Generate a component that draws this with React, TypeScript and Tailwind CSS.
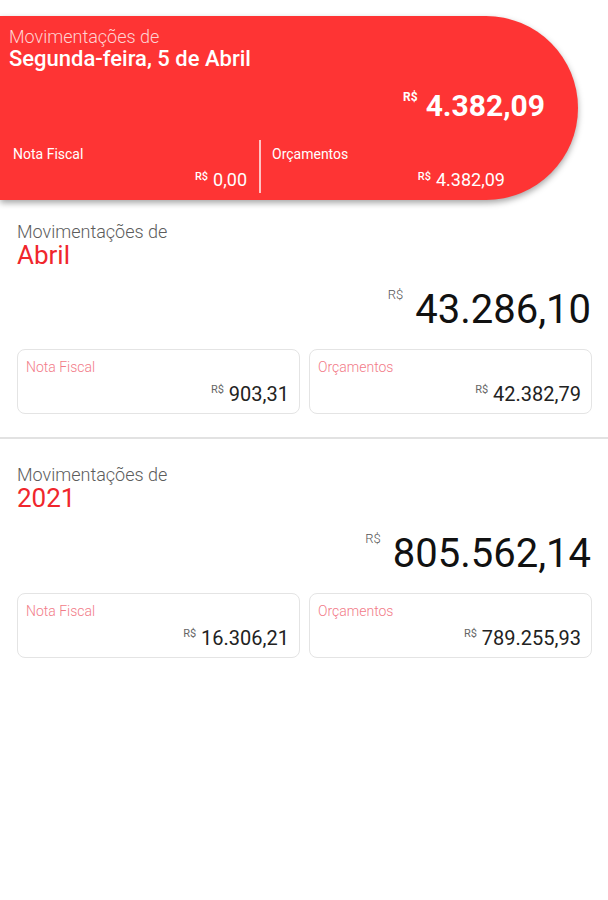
const font = { fontFamily: "Roboto, 'Noto Sans', sans-serif" };

type Period = {
  label: string;
  total: string;
  notaFiscal: string;
  orcamentos: string;
};

const periods: Period[] = [
  { label: "Abril", total: "43.286,10", notaFiscal: "903,31", orcamentos: "42.382,79" },
  { label: "2021", total: "805.562,14", notaFiscal: "16.306,21", orcamentos: "789.255,93" },
];

function TodayCard() {
  return (
    <div className="flex h-[184px] w-[578px] flex-col rounded-r-[92px] bg-[#fe3434] text-white shadow-[0_3px_6px_rgba(0,0,0,0.35)]">
      <div className="pl-[9px] pt-[11px]">
        <p className="text-[18px] font-light leading-[20px] text-[#ffd2d2]">Movimentações de</p>
        <p className="text-[22px] font-medium leading-[24px]">Segunda-feira, 5 de Abril</p>
      </div>

      <div className="mt-[20px] flex items-start justify-end pr-[33px]">
        <span className="text-[12px] font-bold leading-[12px]">R$</span>
        <span className="ml-[8px] text-[30px] font-bold leading-[30px]">4.382,09</span>
      </div>

      <div className="mt-[19px] flex h-[53px] w-[517px]">
        <div className="flex flex-1 flex-col pl-[13px] pr-[12px] pt-[6px]">
          <p className="text-[14px] leading-[16px]">Nota Fiscal</p>
          <div className="mt-[8px] flex items-start justify-end">
            <span className="mt-px text-[11px] font-medium leading-[11px]">R$</span>
            <span className="ml-[5px] text-[18px] leading-[20px]">0,00</span>
          </div>
        </div>
        <div className="w-[2px] bg-white/70" />
        <div className="flex w-[256px] flex-col pl-[11px] pr-[12px] pt-[6px]">
          <p className="text-[14px] leading-[16px]">Orçamentos</p>
          <div className="mt-[8px] flex items-start justify-end">
            <span className="mt-px text-[11px] font-medium leading-[11px]">R$</span>
            <span className="ml-[5px] text-[18px] leading-[20px]">4.382,09</span>
          </div>
        </div>
      </div>
    </div>
  );
}

function MiniCard({ title, value }: { title: string; value: string }) {
  return (
    <div className="flex h-[65px] flex-col rounded-[8px] border border-[#e4e4e4] pl-[8px] pr-[10px] pt-[9px]">
      <p className="text-[14px] font-light leading-[16px] text-[#f27b88]">{title}</p>
      <div className="mt-[8px] flex items-start justify-end">
        <span className="mt-[1px] text-[11px] leading-[11px] text-[#666]">R$</span>
        <span className="ml-[5px] text-[20px] leading-[22px] text-[#222]">{value}</span>
      </div>
    </div>
  );
}

function PeriodSection({ period, loose }: { period: Period; loose?: boolean }) {
  return (
    <section className="pb-[23px]">
      <div className="px-[17px]">
        <p className="text-[18px] font-light leading-[19px] text-[#5c5c5c]">Movimentações de</p>
        <p className="text-[26px] leading-[28px] text-[#f0262c]">{period.label}</p>
      </div>

      <div className={`flex items-start justify-end pr-[17px] ${loose ? "mt-[22px]" : "mt-[21px]"}`}>
        <span className="-mt-[2px] text-[13px] font-light leading-[13px] text-[#555]">R$</span>
        <span className="ml-[12px] text-[40px] leading-[40px] text-[#111]">{period.total}</span>
      </div>

      <div className="mt-[19px] grid grid-cols-2 gap-[9px] pl-[17px] pr-[16px]">
        <MiniCard title="Nota Fiscal" value={period.notaFiscal} />
        <MiniCard title="Orçamentos" value={period.orcamentos} />
      </div>
    </section>
  );
}

export default function App() {
  return (
    <div className="min-h-[900px] w-[608px] bg-white pt-[16px]" style={font}>
      <TodayCard />
      <div className="pt-[22px]">
        <PeriodSection period={periods[0]} />
        <div className="h-[2px] bg-[#e2e2e2]" />
        <div className="pt-[26px]">
          <PeriodSection period={periods[1]} loose />
        </div>
      </div>
    </div>
  );
}
